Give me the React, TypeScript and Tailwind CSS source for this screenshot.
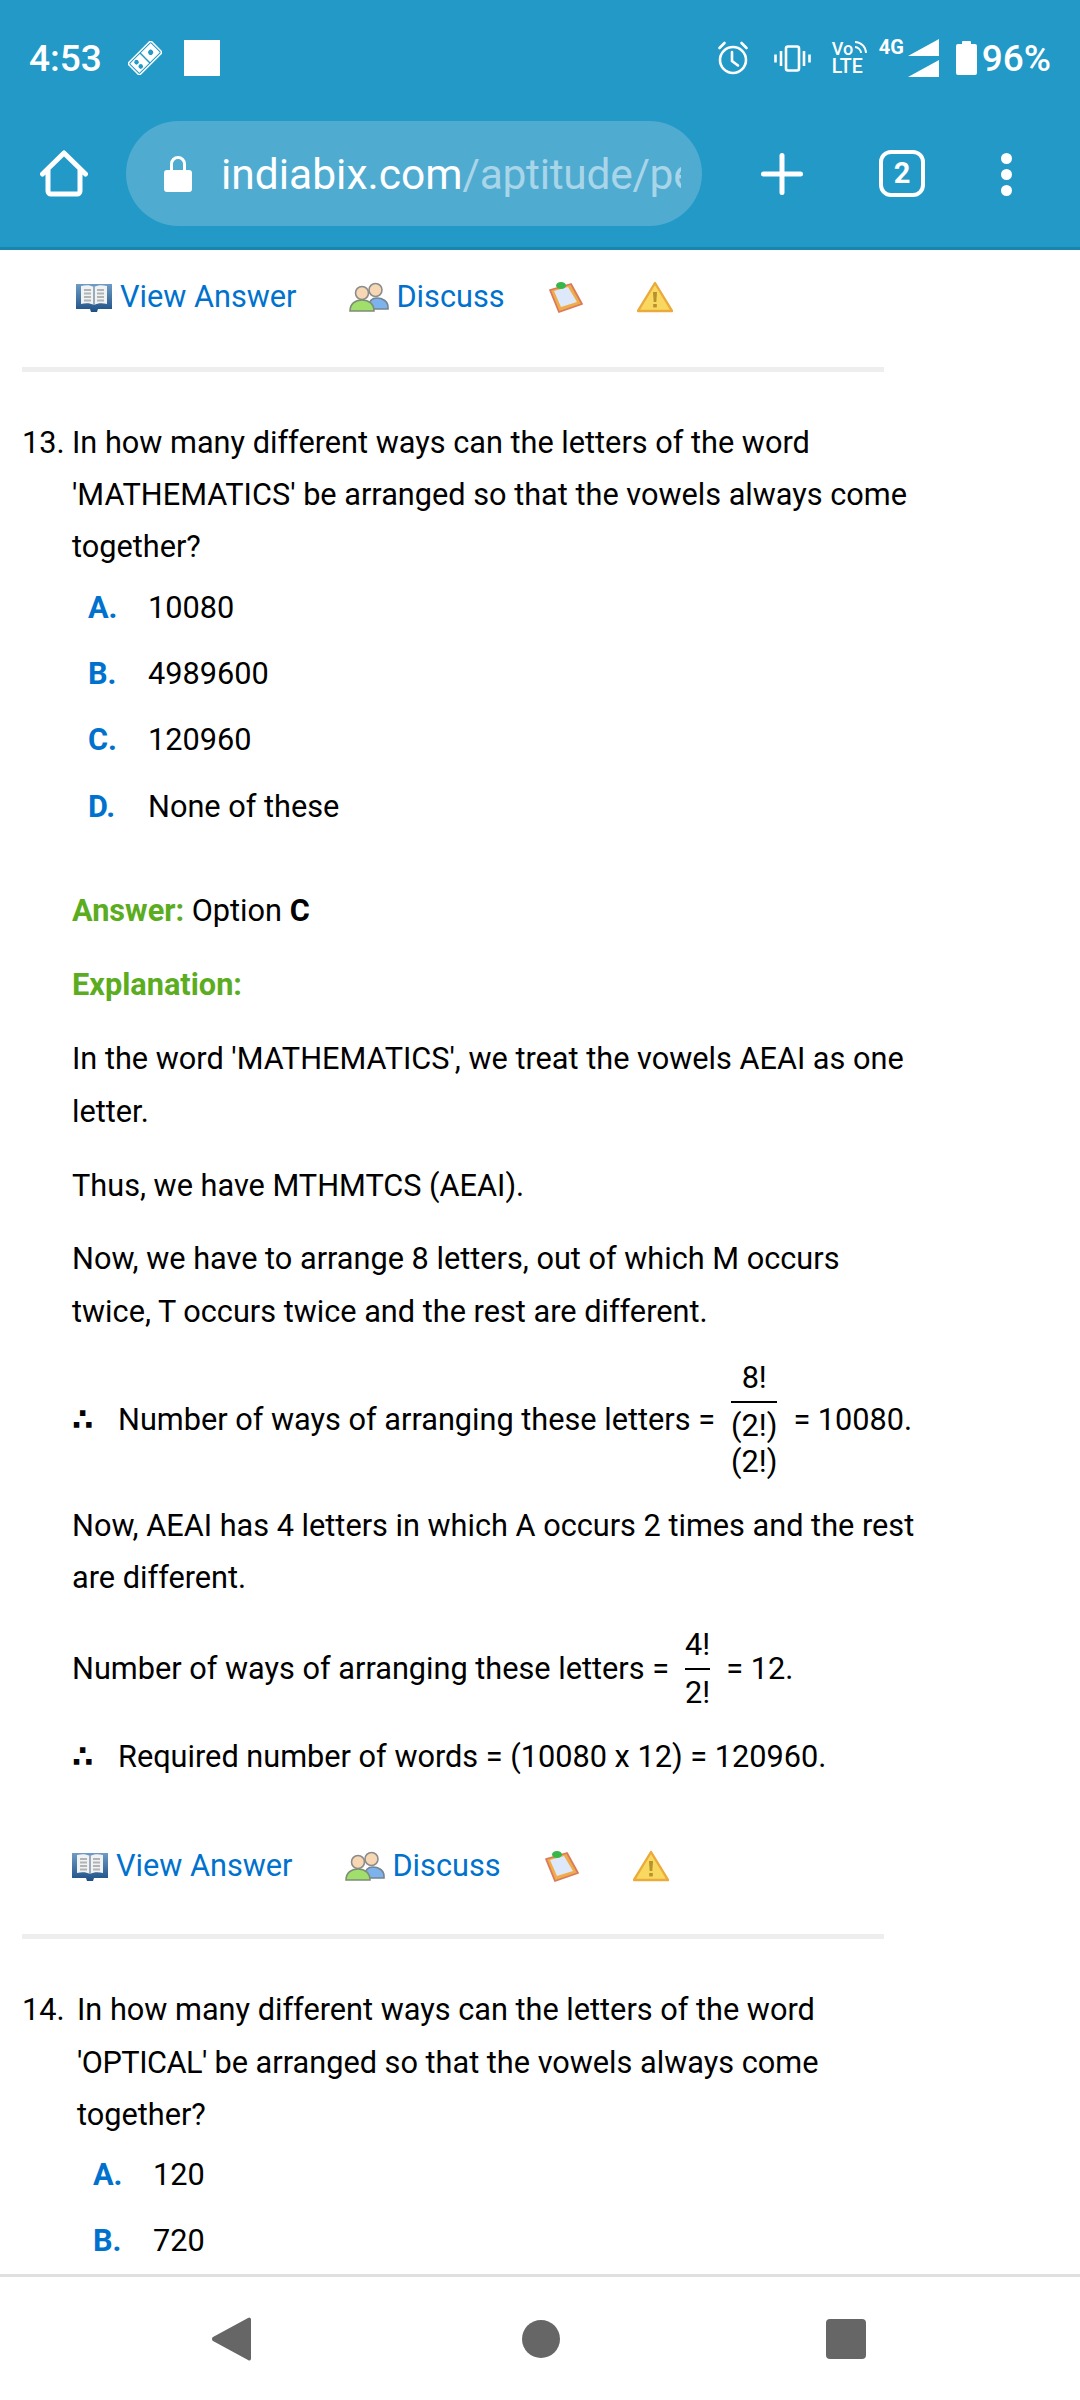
import React from 'react';

const BookIcon = () => (
  <svg width="36" height="31" viewBox="0 0 36 31" className="shrink-0 blur-[0.5px]">
    <defs>
      <linearGradient id="bookCover" x1="0" y1="0" x2="0" y2="1">
        <stop offset="0" stopColor="#6f9cc6" />
        <stop offset="1" stopColor="#1d4f86" />
      </linearGradient>
    </defs>
    <path d="M0 2h36v25H22l-1 3h-6l-1-3H0z" fill="url(#bookCover)" />
    <path d="M5 4c5-1 9-1 13 1 4-2 8-2 13-1v18c-5-1-9-1-13 1-4-2-8-2-13-1z" fill="#f1f2f2" />
    <path d="M18 5v18" stroke="#7f93a8" strokeWidth="1.5" />
    <path d="M8 8h7M8 11.500h7M8 15h7M8 18.500h7M21 8h7M21 11.500h7M21 15h7M21 18.500h7" stroke="#b0b4b6" strokeWidth="1.8" />
  </svg>
);

const PeopleIcon = () => (
  <svg width="40" height="30" viewBox="0 0 40 30" className="shrink-0 blur-[0.4px]">
    <circle cx="26.500" cy="8" r="6.500" fill="#f8d8b4" stroke="#8c8c8c" strokeWidth="1.600" />
    <path d="M20 25c0-6 3-9 8-9s11 3 11 9v2H22z" fill="#7db3ec" stroke="#77838f" strokeWidth="1.600" />
    <circle cx="13" cy="11" r="6.500" fill="#f8d8b4" stroke="#8c8c8c" strokeWidth="1.600" />
    <path d="M1 29c0-7 5-11 12-11s12 4 12 11z" fill="#a0df6c" stroke="#7f8c76" strokeWidth="1.600" />
  </svg>
);

const NoteIcon = () => (
  <svg width="34" height="32" viewBox="0 0 34 32" className="shrink-0 blur-[0.5px]">
    <path d="M1 9 22 3l11 20-23 8z" fill="#efac48" stroke="#d97a5c" strokeWidth="1.800" strokeLinejoin="round" />
    <path d="M5 10 19 6l9 15-16 5z" fill="#dde8fb" />
    <ellipse cx="12" cy="4.500" rx="5" ry="3.500" fill="#38b64a" />
  </svg>
);

const WarnIcon = () => (
  <svg width="36" height="32" viewBox="0 0 36 32" className="shrink-0 blur-[0.5px]">
    <path d="M18 2 35 30H1z" fill="#f9d860" stroke="#eaab3c" strokeWidth="2.400" strokeLinejoin="round" />
    <path d="M16 11h4l-.7 10h-2.600z" fill="#b6912e" />
    <rect x="16.200" y="23" width="3.600" height="3.400" fill="#b6912e" />
  </svg>
);

const ActionRow = ({ className }: { className: string }) => (
  <div className={`flex items-center h-[40px] ${className}`}>
    <BookIcon />
    <a className="ml-[8px] text-[#0072ce]">View Answer</a>
    <span className="ml-[53px]"><PeopleIcon /></span>
    <a className="ml-[7px] text-[#0072ce]">Discuss</a>
    <span className="ml-[44px]"><NoteIcon /></span>
    <span className="ml-[54px]"><WarnIcon /></span>
  </div>
);

const Option = ({ letter, value }: { letter: string; value: string }) => (
  <div className="flex items-center h-[66.4px]">
    <span className="w-[60px] font-bold text-[#0072ce]">{letter}</span>
    <span>{value}</span>
  </div>
);

const Fraction = ({ top, bottom }: { top: string; bottom: React.ReactNode }) => (
  <span className="inline-flex flex-col items-center mx-[16px] leading-[36px]">
    <span>{top}</span>
    <span className="self-stretch h-[2px] bg-black my-[5px]" />
    <span className="text-center">{bottom}</span>
  </span>
);

const Divider = () => <div className="w-[862px] h-[5px] ml-[22px] bg-[#eeeeee]" />;

const Therefore = () => (
  <span className="inline-block w-[46px] shrink-0 font-['DejaVu_Sans',sans-serif] font-bold">∴</span>
);

export default function App() {
  return (
    <div className="w-[1080px] h-[2400px] flex flex-col overflow-hidden bg-white font-['Roboto',sans-serif] text-[30.7px] leading-[52.4px] text-black">
      {/* browser chrome */}
      <header className="h-[250px] shrink-0 bg-[#2299c6] border-b-[3px] border-[#1a85ad] text-white flex flex-col">
        <div className="h-[116px] flex items-center pl-[29px] pr-[29px]">
          <span className="text-[37px] leading-none font-medium">4:53</span>
          <svg width="34" height="34" viewBox="0 0 34 34" className="ml-[26px]">
            <g transform="rotate(-45 17 17)">
              <rect x="0" y="8" width="34" height="18" rx="2" fill="white" />
              <rect x="2" y="10" width="30" height="14" rx="1" fill="none" stroke="#2299c6" strokeWidth="1" />
              <path d="M17 10v14" stroke="#2299c6" strokeWidth="1.500" />
              <circle cx="8" cy="14" r="2.300" fill="#2299c6" />
              <circle cx="8" cy="20" r="2.300" fill="#2299c6" />
              <circle cx="25" cy="17" r="2.600" fill="#2299c6" />
            </g>
          </svg>
          <div className="ml-[22px] w-[36px] h-[36px] bg-white" />
          <div className="flex-1" />
          <svg width="32" height="34" viewBox="0 0 32 34" fill="none" stroke="white" strokeWidth="2.600" strokeLinecap="round">
            <circle cx="16" cy="19" r="13" />
            <path d="M15 11v9l6 4.500M2.500 7l5-5M29.500 7l-5-5" />
          </svg>
          <svg width="37" height="27" viewBox="0 0 37 27" fill="none" stroke="white" strokeWidth="2.600" className="ml-[25px]">
            <rect x="12" y="1.500" width="13" height="24" rx="2" />
            <path d="M7 6v15M1.500 9.500v8M30 6v15M35.500 9.500v8" />
          </svg>
          <div className="ml-[21px] w-[33px] flex flex-col items-start font-medium">
            <div className="flex items-start h-[16px]">
              <span className="text-[18px] leading-[16px]">Vo</span>
              <svg width="13" height="13" viewBox="0 0 13 13" fill="none" stroke="white" strokeWidth="1.800" className="ml-[1px]">
                <path d="M1 1c6 0 11 5 11 11M1 6c3 0 6 3 6 6" />
              </svg>
            </div>
            <span className="text-[19.5px] leading-[17px] mt-[1px]">LTE</span>
          </div>
          <div className="ml-[14px] w-[26px] self-start mt-[37px] text-[20px] leading-[20px] font-bold">4G</div>
          <svg width="31" height="38" viewBox="0 0 31 38" fill="white" className="ml-[3px]">
            <path d="M0 17 31 0v17zM0 38l31-17v17z" />
          </svg>
          <svg width="21" height="34" viewBox="0 0 21 34" fill="white" className="ml-[17px]">
            <path d="M6 3V1a1 1 0 0 1 1-1h7a1 1 0 0 1 1 1v2h4a2 2 0 0 1 2 2v27a2 2 0 0 1-2 2H2a2 2 0 0 1-2-2V5a2 2 0 0 1 2-2z" />
          </svg>
          <span className="ml-[5px] text-[37px] leading-none font-medium">96%</span>
        </div>
        <div className="flex-1 flex items-start pt-[5px]">
          <svg width="48" height="48" viewBox="0 0 48 48" fill="none" stroke="white" strokeWidth="5" strokeLinejoin="round" strokeLinecap="round" className="ml-[40px] mt-[29px]">
            <path d="M2.500 24 24 3l21.500 21M8 20v21a3 3 0 0 0 3 3h26a3 3 0 0 0 3-3V20" />
          </svg>
          <div className="ml-[38px] w-[576px] h-[105px] rounded-full bg-[#50abd1] flex items-center pl-[38px] pr-[21px] overflow-hidden">
            <svg width="28" height="37" viewBox="0 0 28 37" fill="white" className="shrink-0">
              <path d="M3 15h3V9a8 8 0 0 1 16 0v6h3a3 3 0 0 1 3 3v16a3 3 0 0 1-3 3H3a3 3 0 0 1-3-3V18a3 3 0 0 1 3-3zm6 0h10V9a5 5 0 0 0-10 0z" />
            </svg>
            <span className="ml-[29px] mt-[4px] text-[42.5px] leading-none whitespace-nowrap overflow-hidden">
              indiabix.com<span className="text-[#a8d5e8] tracking-[-0.3px]">/aptitude/permutation</span>
            </span>
          </div>
          <svg width="42" height="42" viewBox="0 0 42 42" stroke="white" strokeWidth="5" strokeLinecap="round" className="ml-[59px] mt-[32px]">
            <path d="M21 2.500v37M2.500 21h37" />
          </svg>
          <div className="ml-[76px] mt-[29px] w-[46px] h-[47px] rounded-[12px] border-[4px] border-white flex items-center justify-center text-[29px] leading-none font-bold">2</div>
          <div className="ml-[76px] mt-[32px] flex flex-col gap-[5px]">
            <div className="w-[11px] h-[11px] rounded-full bg-white" />
            <div className="w-[11px] h-[11px] rounded-full bg-white" />
            <div className="w-[11px] h-[11px] rounded-full bg-white" />
          </div>
        </div>
      </header>

      {/* page content */}
      <main className="flex-1 overflow-hidden">
        <ActionRow className="ml-[76px] mt-[27px]" />
        <div className="mt-[50px]"><Divider /></div>

        <div className="flex mt-[44.5px] pl-[22px] w-[922px]">
          <span className="w-[50px] shrink-0">13.</span>
          <div className="flex-1">
            <p>In how many different ways can the letters of the word 'MATHEMATICS' be arranged so that the vowels always come together?</p>
            <div className="pl-[16px] mt-[1px]">
              <Option letter="A." value="10080" />
              <Option letter="B." value="4989600" />
              <Option letter="C." value="120960" />
              <Option letter="D." value="None of these" />
            </div>
            <p className="mt-[45px]"><span className="font-bold text-[#5bad1f]">Answer:</span> Option <b>C</b></p>
            <p className="mt-[21px] font-bold text-[#5bad1f]">Explanation:</p>
            <p className="mt-[22px]">In the word 'MATHEMATICS', we treat the vowels AEAI as one letter.</p>
            <p className="mt-[22px]">Thus, we have MTHMTCS (AEAI).</p>
            <p className="mt-[21px]">Now, we have to arrange 8 letters, out of which M occurs twice, T occurs twice and the rest are different.</p>
            <div className="flex items-center mt-[22px] whitespace-nowrap">
              <Therefore />
              <span>Number of ways of arranging these letters =</span>
              <Fraction top="8!" bottom={<>(2!)<br />(2!)</>} />
              <span>= 10080.</span>
            </div>
            <p className="mt-[19.5px]">Now, AEAI has 4 letters in which A occurs 2 times and the rest are different.</p>
            <div className="flex items-center mt-[23px]">
              <span>Number of ways of arranging these letters =</span>
              <Fraction top="4!" bottom="2!" />
              <span>= 12.</span>
            </div>
            <p className="mt-[20px]"><Therefore />Required number of words = (10080 x 12) = 120960.</p>
            <ActionRow className="mt-[62.5px]" />
          </div>
        </div>

        <div className="mt-[48px]"><Divider /></div>

        <div className="flex mt-[45px] pl-[22px] w-[922px]">
          <span className="w-[55px] shrink-0">14.</span>
          <div className="flex-1">
            <p>In how many different ways can the letters of the word <span className="tracking-[-0.5px]">'OPTICAL'</span> be arranged so that the vowels always come together?</p>
            <div className="pl-[16px]">
              <Option letter="A." value="120" />
              <Option letter="B." value="720" />
            </div>
          </div>
        </div>
      </main>

      {/* android nav bar */}
      <nav className="h-[126px] shrink-0 bg-white border-t-[3px] border-[#e0e0e0] flex items-center">
        <svg width="40" height="44" viewBox="0 0 40 44" fill="#666666" className="ml-[211px]">
          <path d="M37 1a2 2 0 0 1 3 1v40a2 2 0 0 1-3 1L2 24a2.500 2.500 0 0 1 0-4z" />
        </svg>
        <div className="ml-[271px] w-[38px] h-[38px] rounded-full bg-[#666666]" />
        <div className="ml-[266px] w-[40px] h-[40px] rounded-[4px] bg-[#666666]" />
      </nav>
    </div>
  );
}
